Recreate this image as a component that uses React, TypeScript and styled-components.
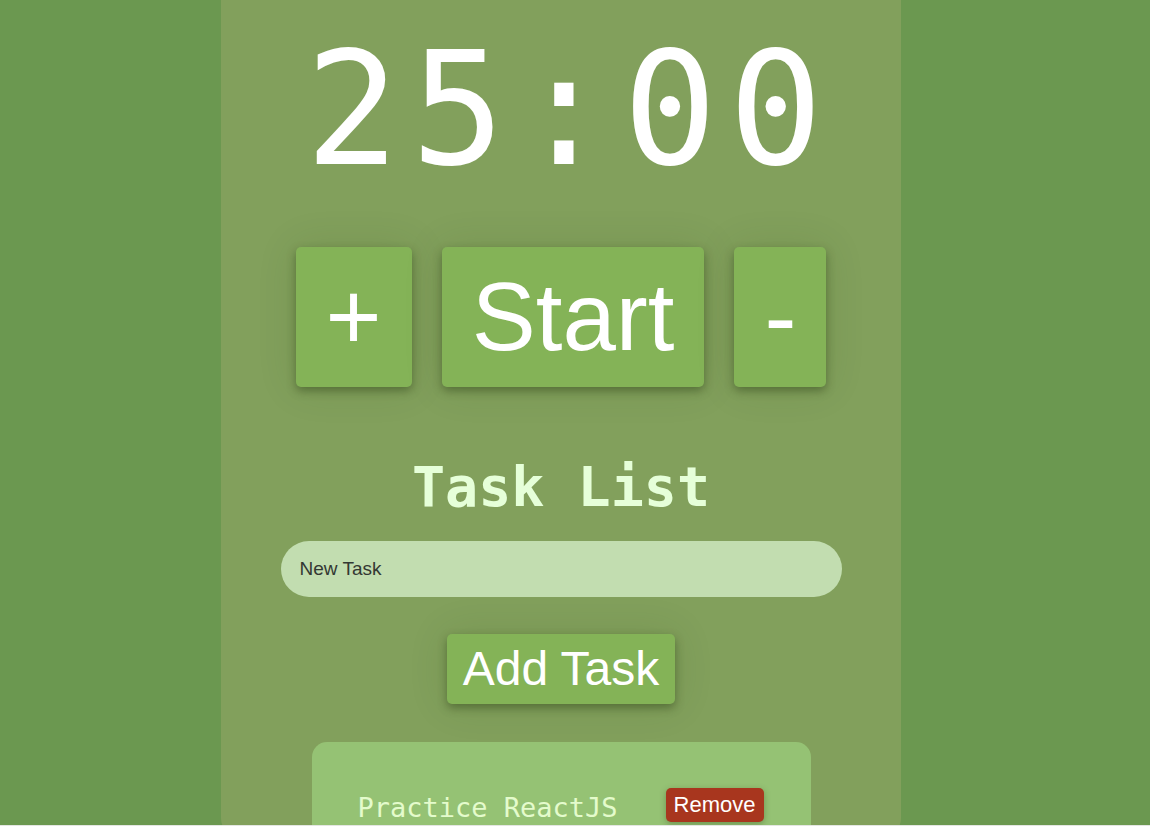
import React, { useState } from "react";
import styled, { createGlobalStyle } from "styled-components";

const GlobalStyle = createGlobalStyle`
  html { background: #e4e6e2; }
  body {
    margin: 0;
    background: #6b9850;
    font-family: "Liberation Sans", Arial, sans-serif;
  }
`;

const Viewport = styled.div`
  height: 825px;
  overflow: hidden;
  background: #6b9850;
`;

const Panel = styled.main`
  width: 680px;
  height: 838px;
  margin-left: 221px;
  background: #82a05c;
  border-radius: 0 0 20px 20px;
  display: flex;
  flex-direction: column;
  align-items: center;
  box-sizing: border-box;
  padding-top: 7px;
  overflow: hidden;

  & > * {
    flex-shrink: 0;
  }
`;

const Timer = styled.div`
  font-family: "DejaVu Sans Mono", "Liberation Mono", monospace;
  font-size: 156px;
  line-height: 207px;
  color: #ffffff;
  letter-spacing: 12px;
  padding-left: 18px;
`;

const Controls = styled.div`
  display: flex;
  gap: 30px;
  margin-top: 33px;
`;

const BigButton = styled.button`
  font-family: "Liberation Sans", Arial, sans-serif;
  font-size: 96px;
  line-height: 110px;
  padding: 15px 30px;
  color: #ffffff;
  background: #84b357;
  border: none;
  border-radius: 5px;
  box-shadow: 0 4px 10px rgba(40, 60, 20, 0.45), 0 0 40px rgba(40, 60, 20, 0.12);
  cursor: pointer;
`;

const Heading = styled.h2`
  font-family: "DejaVu Sans Mono", "Liberation Mono", monospace;
  font-weight: bold;
  font-size: 55px;
  line-height: 64px;
  color: #e6ffd9;
  margin: 68px 0 0;
`;

const TaskInput = styled.input`
  width: 561px;
  height: 56px;
  box-sizing: border-box;
  margin-top: 22px;
  border: none;
  border-radius: 28px;
  background: #c2ddb0;
  padding: 0 19px;
  font-family: "Liberation Sans", Arial, sans-serif;
  font-size: 19px;
  color: #333833;
  outline: none;
`;

const AddButton = styled.button`
  margin-top: 37px;
  font-family: "Liberation Sans", Arial, sans-serif;
  font-size: 48px;
  line-height: 54px;
  padding: 8px 16px;
  color: #ffffff;
  background: #84b357;
  border: none;
  border-radius: 5px;
  box-shadow: 0 4px 10px rgba(40, 60, 20, 0.45), 0 0 40px rgba(40, 60, 20, 0.12);
  cursor: pointer;
`;

const TaskCard = styled.ul`
  list-style: none;
  width: 499px;
  box-sizing: border-box;
  margin: 38px 0 0;
  padding: 46px 30px 30px 46px;
  background: #95c274;
  border-radius: 15px;
`;

const TaskRow = styled.li`
  display: flex;
  align-items: center;
  gap: 48px;
  height: 34px;
`;

const TaskText = styled.span`
  font-family: "DejaVu Sans Mono", "Liberation Mono", monospace;
  font-size: 27px;
  color: #e4fbcc;
  position: relative;
  top: 2px;
`;

const RemoveButton = styled.button`
  font-family: "Liberation Sans", Arial, sans-serif;
  font-size: 22px;
  line-height: 26px;
  padding: 4px 8px;
  color: #ffffff;
  background: #a8361e;
  border: none;
  border-radius: 5px;
  box-shadow: 0 2px 6px rgba(40, 60, 20, 0.35);
  cursor: pointer;
`;

export default function App() {
  const [minutes, setMinutes] = useState(25);
  const [text, setText] = useState("New Task");
  const [tasks, setTasks] = useState<string[]>(["Practice ReactJS"]);

  return (
    <Viewport>
      <GlobalStyle />
      <Panel>
        <Timer>{String(minutes).padStart(2, "0")}:00</Timer>
        <Controls>
          <BigButton onClick={() => setMinutes((m) => m + 1)}>+</BigButton>
          <BigButton>Start</BigButton>
          <BigButton onClick={() => setMinutes((m) => Math.max(1, m - 1))}>-</BigButton>
        </Controls>
        <Heading>Task List</Heading>
        <TaskInput value={text} onChange={(e) => setText(e.target.value)} />
        <AddButton onClick={() => text && setTasks((t) => [...t, text])}>Add Task</AddButton>
        <TaskCard>
          {tasks.map((t, i) => (
            <TaskRow key={i}>
              <TaskText>{t}</TaskText>
              <RemoveButton onClick={() => setTasks((all) => all.filter((_, j) => j !== i))}>
                Remove
              </RemoveButton>
            </TaskRow>
          ))}
        </TaskCard>
      </Panel>
    </Viewport>
  );
}
